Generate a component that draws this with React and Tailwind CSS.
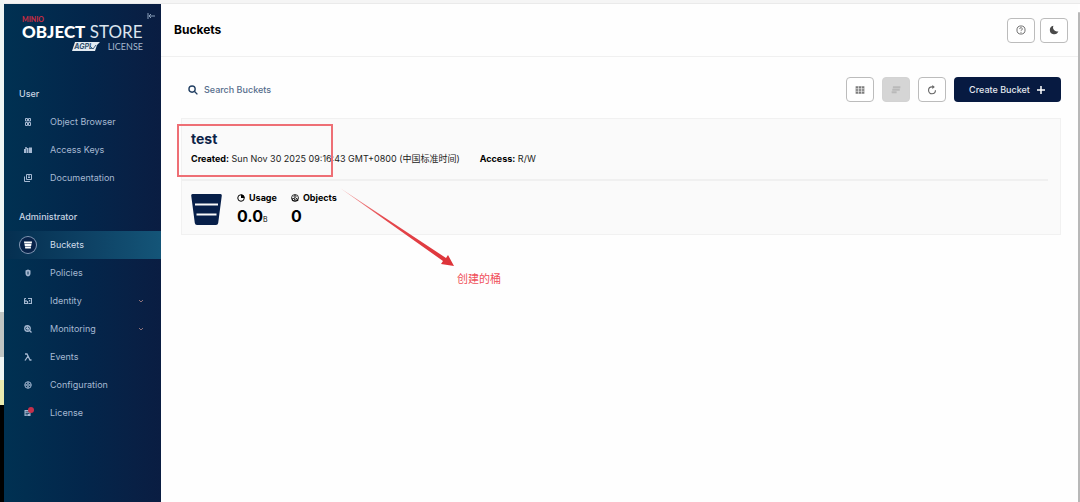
import React, { useState } from 'react';

const icon = {
  browser: (
    <g fill="none" stroke="currentColor" strokeWidth="2">
      <path d="M3 1h4v5H3zM9 1h4v5H9zM3 9h4v6H3zM9 9h4v6H9z" />
    </g>
  ),
  keys: (
    <g fill="currentColor">
      <path d="M0 6h4v8H0zM5 4h4v10H5zM10 3h6v11h-6z" />
      <circle cx="4" cy="4" r="2" />
    </g>
  ),
  docs: (
    <g fill="none" stroke="currentColor" strokeWidth="2">
      <path d="M5 1h10v10H5zM1 5v10h11M8 4h4M8 7h4" />
    </g>
  ),
  buckets: (
    <g fill="currentColor">
      <path d="M0 1h16l-.5 4H.5zM1 6h14l-.6 4H1.600zM2 11h12l-.4 4H2.400z" />
    </g>
  ),
  policies: (
    <path
      fill="currentColor"
      fillRule="evenodd"
      d="M8 1l5 2v6c0 3-2 5-5 6-3-1-5-3-5-6V3zM7 5v6h2V5z"
    />
  ),
  identity: (
    <g fill="none" stroke="currentColor" strokeWidth="2.4">
      <path d="M1 3v10h6V8M1 3h3M8 3h7v10H9M11 6v3M4 6v4" />
    </g>
  ),
  monitoring: (
    <g fill="none" stroke="currentColor" strokeWidth="2.6">
      <circle cx="7" cy="7" r="5.500" />
      <path d="M11 11l4 4M4 7h2l1-2 1 4 1-2h1" />
    </g>
  ),
  events: (
    <path fill="none" stroke="currentColor" strokeWidth="2.6" d="M2 2h4l6 12h3M7.500 7L2 15" />
  ),
  configuration: (
    <g fill="none" stroke="currentColor" strokeWidth="2">
      <circle cx="8" cy="8" r="6.500" />
      <circle cx="8" cy="8" r="2.500" />
      <path d="M8 1.500v4M8 10.500v4M2 8h3.500M10.500 8H14" />
    </g>
  ),
  license: (
    <path fill="currentColor" fillRule="evenodd" d="M1 2h12v12H1zM3 5v1.500h8V5zM3 8v1.500h8V8zM3 11v1.500h5V11z" />
  ),
};

const USER_ITEMS = [
  { id: 'browser', label: 'Object Browser' },
  { id: 'keys', label: 'Access Keys' },
  { id: 'docs', label: 'Documentation' },
];

const ADMIN_ITEMS = [
  { id: 'buckets', label: 'Buckets', active: true },
  { id: 'policies', label: 'Policies' },
  { id: 'identity', label: 'Identity', expandable: true },
  { id: 'monitoring', label: 'Monitoring', expandable: true },
  { id: 'events', label: 'Events' },
  { id: 'configuration', label: 'Configuration' },
  { id: 'license', label: 'License', alert: true },
];

function NavItem({ item }) {
  return (
    <li>
      <a
        href={`#${item.id}`}
        className={`flex h-7 items-center pl-4 pr-4 text-[9px] ${
          item.active
            ? 'bg-gradient-to-r from-[#052f50] via-[#0d4063] to-[#145578] text-[#d0dcea]'
            : 'text-[#a6b9d2]'
        }`}
      >
        <span
          className={`relative flex size-4 shrink-0 items-center justify-center rounded-full ${
            item.active ? 'bg-[#08234a] text-white ring-1 ring-[#8397b3]' : ''
          }`}
        >
          <svg className="size-2" viewBox="0 0 16 16" aria-hidden="true">
            {icon[item.id]}
          </svg>
          {item.alert && <span className="absolute right-0.5 top-0.5 size-1.5 rounded-full bg-[#c5304b]" />}
        </span>
        <span className="ml-3.5 flex-1">{item.label}</span>
        {item.expandable && (
          <svg className="size-2 text-[#8d7078]" viewBox="0 0 8 8" fill="none" stroke="currentColor" aria-hidden="true">
            <path d="M2 3l2 2 2-2" />
          </svg>
        )}
      </a>
    </li>
  );
}

function Sidebar() {
  return (
    <aside className="w-[157px] shrink-0 bg-gradient-to-r from-[#003152] via-[#03264b] to-[#0a1d42]">
      {/* Logo */}
      <div className="relative flex h-[50px] flex-col pl-[18px] pr-4 pt-3">
        <span className="font-[Lato] text-[7px] font-black leading-[6px] text-[#c22b42]">MINIO</span>
        <span className="whitespace-nowrap font-[Lato] text-[17px] leading-[20px] text-[#dbe4ee]">
          <b className="font-black text-white">OBJECT</b> <span className="font-normal">STORE</span>
        </span>
        <span className="flex items-center justify-end gap-2 pr-0.5">
          <span className="relative flex h-[9px] w-7 items-center justify-center">
            <svg className="absolute inset-0 h-full w-full" viewBox="0 0 28 9" aria-hidden="true">
              <path d="M3 0h25l-3 3-2 6H0z" fill="#e3ebf2" />
              <path d="M18 4l3 3 3-4" fill="none" stroke="#42617d" />
            </svg>
            <span className="relative pr-1 text-[7px] font-bold italic leading-[9px] text-[#31506d]">AGPL</span>
          </span>
          <span className="font-[Lato] text-[9px] leading-[9px] text-[#a5b8cd]">LICENSE</span>
        </span>
        <button type="button" aria-label="Collapse menu" className="absolute right-1.5 top-2 text-[#8ba0bb]">
          <svg className="size-2" viewBox="0 0 8 8" fill="none" stroke="currentColor">
            <path d="M1 1v6M2 4h6M4 2L2 4l2 2" />
          </svg>
        </button>
      </div>

      <nav className="pt-8">
        <h2 className="pl-[15px] text-[9px] font-medium leading-4 text-[#c9d5e3]">User</h2>
        <ul className="pt-1.5">
          {USER_ITEMS.map((item) => (
            <NavItem key={item.id} item={item} />
          ))}
        </ul>
        <h2 className="pl-[15px] pt-[17px] text-[9px] font-medium leading-4 text-[#c9d5e3]">Administrator</h2>
        <ul className="pt-1.5">
          {ADMIN_ITEMS.map((item) => (
            <NavItem key={item.id} item={item} />
          ))}
        </ul>
      </nav>
    </aside>
  );
}

function IconButton({ label, disabled, children }) {
  return (
    <button
      type="button"
      aria-label={label}
      disabled={disabled}
      className={`flex h-[25px] w-7 items-center justify-center rounded-sm border ${
        disabled ? 'border-[#d3d3d3] bg-[#d5d5d5] text-[#b9b9b9]' : 'border-[#bcbcbc] bg-white text-[#666]'
      }`}
    >
      <svg className="size-2.5" viewBox="0 0 16 16" aria-hidden="true">
        {children}
      </svg>
    </button>
  );
}

function BucketCard() {
  return (
    <article className="relative mt-4 border border-[#f1f1f1] bg-[#fafafa] text-[9px] text-[#222]">
      <div className="px-[9px] pb-2.5 pt-2.5">
        <h2 className="text-[14px] font-bold leading-5 text-[#0b2247]">test</h2>
        <div className="flex gap-5 leading-5">
          <p>
            <b className="font-bold text-black">Created:</b> Sun Nov 30 2025 09:16:43 GMT+0800 (中国标准时间)
          </p>
          <p>
            <b className="font-bold text-black">Access:</b> R/W
          </p>
        </div>
      </div>
      <div className="mr-3 h-0.5 bg-[#f0f0f0]" />
      <div className="flex px-[9px] pb-1 pt-[9px] text-black">
        <svg className="mt-1 h-[31px] w-[31px]" viewBox="0 0 31 31" aria-hidden="true">
          <path d="M1.500 0h28q1.500 0 1.300 1.500l-3.600 27.500q-.3 2-2.200 2H6q-1.900 0-2.200-2L.2 1.500Q0 0 1.500 0z" fill="#071f49" />
          <path d="M4 10.500h23M5.500 20.500h20" stroke="#fafafa" strokeWidth="2" />
        </svg>
        <dl className="ml-[15px] flex gap-3.5">
          <div>
            <dt className="flex items-center gap-1 font-bold leading-4">
              <svg className="size-2" viewBox="0 0 16 16" aria-hidden="true">
                <circle cx="8" cy="8" r="6.500" fill="none" stroke="currentColor" strokeWidth="2" />
                <path d="M8 1a7 7 0 0 1 7 7H8z" fill="currentColor" />
              </svg>
              Usage
            </dt>
            <dd className="text-[16px] font-bold leading-5">
              0.0<span className="text-[7px] font-normal">B</span>
            </dd>
          </div>
          <div>
            <dt className="flex items-center gap-1 font-bold leading-4">
              <svg className="size-2" viewBox="0 0 16 16" fill="none" stroke="currentColor" strokeWidth="1.6" aria-hidden="true">
                <circle cx="8" cy="8" r="7" />
                <circle cx="8" cy="5" r="2" />
                <path d="M3 9h4v4H3zM11 8l3 5H9z" />
              </svg>
              Objects
            </dt>
            <dd className="text-[16px] font-bold leading-5">0</dd>
          </div>
        </dl>
      </div>

      {/* Callout drawn over the card */}
      <div className="pointer-events-none absolute -left-[5px] top-[5px] h-[53px] w-[156px] border-2 border-[#ee6f75]" />
      <svg className="pointer-events-none absolute left-[156px] top-[68px] h-20 w-[120px]" viewBox="0 0 120 80" aria-hidden="true">
        <defs>
          <linearGradient id="arrow" x1="0" y1="0" x2="1" y2="1">
            <stop offset="0" stopColor="#f3a3a3" />
            <stop offset="0.4" stopColor="#e5484d" />
            <stop offset="1" stopColor="#dd3238" />
          </linearGradient>
        </defs>
        <path d="M2 1l106 70 2-3 6 11-13-2 2-3z" fill="url(#arrow)" />
      </svg>
      <p className="pointer-events-none absolute left-[275px] top-[152px] whitespace-nowrap text-[11px] leading-4 text-[#f0505a]">
        创建的桶
      </p>
    </article>
  );
}

export default function App() {
  const [query, setQuery] = useState('');

  return (
    <div className="flex min-h-screen bg-white font-['Inter','Noto_Sans_CJK_SC',sans-serif]">
      {/* Slice of the desktop behind the window */}
      <div className="flex w-1 shrink-0 flex-col bg-[#eef5f4]">
        <div className="h-[312px]" />
        <div className="h-[45px] bg-[#bfc5c3]" />
        <div className="h-[23px]" />
        <div className="h-[25px] bg-[#e9ebb0]" />
        <div className="flex-1 bg-black" />
      </div>

      <div className="flex min-w-0 flex-1 flex-col">
        <div className="h-1 shrink-0 border-b border-[#eaeaea] bg-[#f5f5f5]" />
        <div className="flex flex-1">
          <Sidebar />
          <main className="min-w-0 flex-1 bg-[#fefefe]">
            <header className="flex h-[53px] items-center justify-between border-b border-[#f0f0f0] pl-[13px] pr-2.5">
              <h1 className="text-[12px] font-bold text-black">Buckets</h1>
              <div className="flex gap-[5px]">
                <IconButton label="Help">
                  <g fill="none" stroke="currentColor" strokeWidth="1.5">
                    <circle cx="8" cy="8" r="6.500" />
                    <path d="M6 6.500a2 2 0 1 1 3 1.500q-1 .5-1 1.500M8 11v1.500" />
                  </g>
                </IconButton>
                <IconButton label="Dark mode">
                  <path d="M7 1a7 7 0 1 0 8 9A6.500 6.500 0 0 1 7 1z" fill="#4a4a4a" />
                </IconButton>
              </div>
            </header>

            <div className="pl-5 pr-[17px] pt-5">
              <div className="flex items-center justify-between">
                <label className="flex w-[440px] items-center gap-1.5 pl-[7px]">
                  <svg className="size-2.5 text-[#234063]" viewBox="0 0 16 16" fill="none" stroke="currentColor" strokeWidth="2.2" aria-hidden="true">
                    <circle cx="6.500" cy="6.500" r="5" />
                    <path d="M10.500 10.500L15 15" />
                  </svg>
                  <input
                    type="text"
                    aria-label="Search Buckets"
                    value={query}
                    onChange={(e) => setQuery(e.target.value)}
                    placeholder="Search Buckets"
                    className="flex-1 bg-transparent text-[9px] font-medium outline-none placeholder:text-[#556d8c]"
                  />
                </label>
                <div className="flex gap-2">
                  <IconButton label="Grid view">
                    <path d="M1 2h14v12H1z" fill="#7b7b7b" />
                    <path d="M5.500 2v12M10.500 2v12M1 6h14M1 10h14" stroke="#fff" strokeWidth="1" />
                  </IconButton>
                  <IconButton label="List view" disabled>
                    <path d="M3 2h12v3H3zM2 6h12v3H2zM1 10h8v3H1z" fill="currentColor" />
                  </IconButton>
                  <IconButton label="Refresh">
                    <path d="M13.500 8.500A5.500 5.500 0 1 1 8 3h2" fill="none" stroke="currentColor" strokeWidth="1.8" />
                    <path d="M8.500 0l4 3-4 3.500z" fill="currentColor" />
                  </IconButton>
                  <button
                    type="button"
                    className="flex h-[25px] w-[107px] items-center justify-center gap-1.5 rounded-sm bg-[#071a41] text-[9px] font-medium text-[#e4e8ef]"
                  >
                    Create Bucket
                    <svg className="size-2.5" viewBox="0 0 10 10" stroke="#fff" strokeWidth="1.5" aria-hidden="true">
                      <path d="M5 1v8M1 5h8" />
                    </svg>
                  </button>
                </div>
              </div>

              <BucketCard />
            </div>
          </main>
          {/* Window scrollbar */}
          <div className="flex w-0.5 pt-2">
            <div className="flex-1 rounded-t bg-[#b8b8b8]" />
          </div>
        </div>
      </div>
    </div>
  );
}
